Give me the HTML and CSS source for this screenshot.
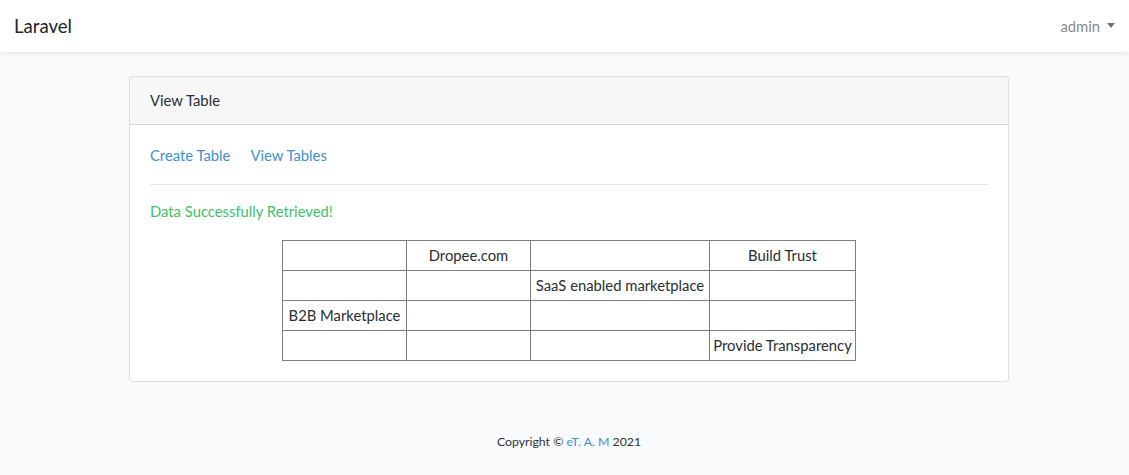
FILE: index.html
```html
<!DOCTYPE html>
<html lang="en">
<head>
<meta charset="utf-8">
<title>Laravel</title>
<link rel="stylesheet" href="styles.css">
</head>
<body>
<nav class="navbar">
  <a class="brand" href="#">Laravel</a>
  <a class="user" href="#">admin <span class="caret"></span></a>
</nav>
<main class="main">
  <div class="card">
    <div class="card-header">View Table</div>
    <div class="card-body">
      <div class="links">
        <a href="#">Create Table</a>
        <a href="#">View Tables</a>
      </div>
      <hr class="rule">
      <p class="success">Data Successfully Retrieved!</p>
      <table class="data">
        <colgroup>
          <col class="c1"><col class="c2"><col class="c3"><col class="c4">
        </colgroup>
        <tr><td></td><td>Dropee.com</td><td></td><td>Build Trust</td></tr>
        <tr><td></td><td></td><td>SaaS enabled marketplace</td><td></td></tr>
        <tr><td>B2B Marketplace</td><td></td><td></td><td></td></tr>
        <tr><td></td><td></td><td></td><td>Provide Transparency</td></tr>
      </table>
    </div>
  </div>
</main>
<footer class="footer">Copyright © <a href="#">eT. A. M</a> 2021</footer>
</body>
</html>
```

FILE: styles.css
```css
* { box-sizing: border-box; }
html, body { margin: 0; padding: 0; }
body {
  background: #f8fafc;
  font-family: "Lato", "Noto Sans", sans-serif;
  font-size: 14.8px;
  line-height: 23px;
  color: #2a2e33;
}
a { color: #3f8fd6; text-decoration: none; }

.navbar {
  height: 52px;
  background: #fff;
  box-shadow: 0 2px 4px rgba(0,0,0,0.075);
  display: flex;
  align-items: center;
  justify-content: space-between;
  padding: 0 14px 0 14px;
}
.brand { color: #212529; font-size: 18.6px; }
.user { color: rgba(0,0,0,0.5); display: flex; align-items: center; gap: 7px; }
.caret {
  width: 0; height: 0;
  border-left: 4.5px solid transparent;
  border-right: 4.5px solid transparent;
  border-top: 5px solid rgba(0,0,0,0.55);
  margin-top: -2px;
}

.main { padding: 24px 0; display: flex; justify-content: center; }
.card {
  width: 880px;
  margin-left: 9px;
  background: #fff;
  border: 1px solid rgba(0,0,0,0.125);
  border-radius: 4px;
}
.card-header {
  background: rgba(0,0,0,0.03);
  border-bottom: 1px solid rgba(0,0,0,0.125);
  padding: 12px 20px;
  height: 48px;
}
.card-body { padding: 20px; }
.links { display: flex; gap: 20px; margin-top: -1px; }
.rule {
  border: 0;
  border-top: 1px solid rgba(0,0,0,0.1);
  margin: 17px 0 15px;
}
.success { color: #3fbf6a; margin: 0 0 17px; }
.data {
  border-collapse: collapse;
  margin: 0 auto;
  table-layout: fixed;
  width: 574px;
}
.data td {
  border: 1px solid #808080;
  height: 30px;
  padding: 2px 3px;
  text-align: center;
  white-space: nowrap;
}
.c1 { width: 124px; }
.c2 { width: 124px; }
.c3 { width: 179px; }
.c4 { width: 146px; }

.footer {
  text-align: center;
  font-size: 12.3px;
  padding-top: 24px;
  margin-left: 9px;
  color: #2f3338;
}
```
